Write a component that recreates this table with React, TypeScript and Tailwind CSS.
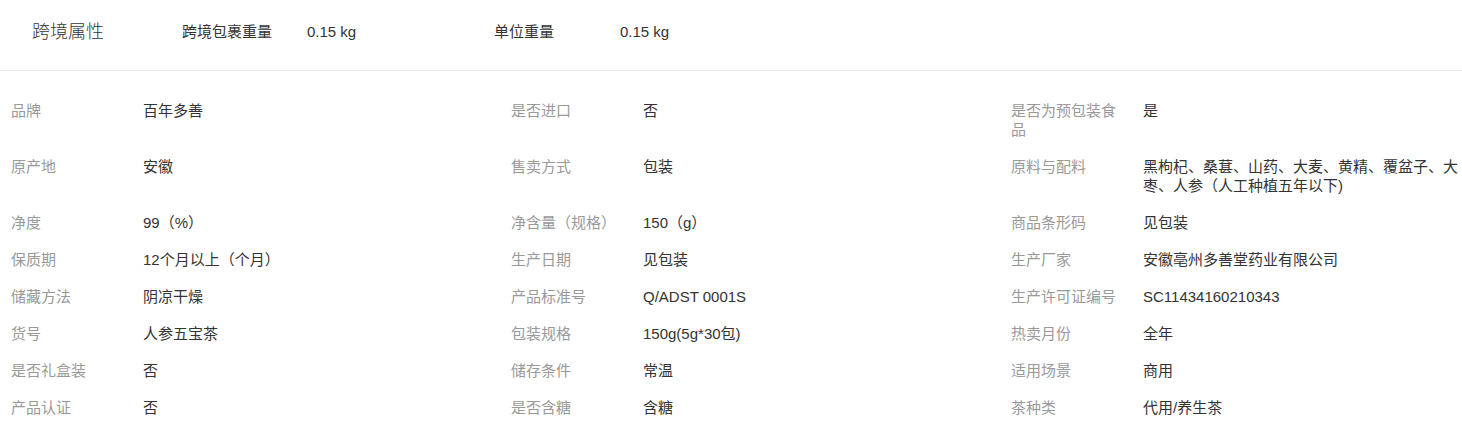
import React from 'react';

type Attr = { label: string; value: string };

const attrs: Attr[] = [
  { label: '品牌', value: '百年多善' },
  { label: '是否进口', value: '否' },
  { label: '是否为预包装食品', value: '是' },
  { label: '原产地', value: '安徽' },
  { label: '售卖方式', value: '包装' },
  { label: '原料与配料', value: '黑枸杞、桑葚、山药、大麦、黄精、覆盆子、大枣、人参（人工种植五年以下)' },
  { label: '净度', value: '99（%）' },
  { label: '净含量（规格）', value: '150（g）' },
  { label: '商品条形码', value: '见包装' },
  { label: '保质期', value: '12个月以上（个月）' },
  { label: '生产日期', value: '见包装' },
  { label: '生产厂家', value: '安徽亳州多善堂药业有限公司' },
  { label: '储藏方法', value: '阴凉干燥' },
  { label: '产品标准号', value: 'Q/ADST 0001S' },
  { label: '生产许可证编号', value: 'SC11434160210343' },
  { label: '货号', value: '人参五宝茶' },
  { label: '包装规格', value: '150g(5g*30包)' },
  { label: '热卖月份', value: '全年' },
  { label: '是否礼盒装', value: '否' },
  { label: '储存条件', value: '常温' },
  { label: '适用场景', value: '商用' },
  { label: '产品认证', value: '否' },
  { label: '是否含糖', value: '含糖' },
  { label: '茶种类', value: '代用/养生茶' },
];

export default function App() {
  return (
    <div
      className="w-[1462px] h-[428px] bg-white overflow-hidden"
      style={{ fontFamily: '"Liberation Sans", "Noto Sans CJK SC", sans-serif' }}
    >
      {/* Cross-border header */}
      <div className="flex items-center pt-[22px] pb-[28px] border-b border-[#e6e6e6] leading-[20px]">
        <div className="pl-[32px] w-[182px] text-[18px] font-light text-[#333]">跨境属性</div>
        <div className="w-[125px] text-[15px] text-[#333]">跨境包裹重量</div>
        <div className="w-[187px] text-[15px] text-[#333]">0.15 kg</div>
        <div className="w-[126px] text-[15px] text-[#333]">单位重量</div>
        <div className="text-[15px] text-[#333]">0.15 kg</div>
      </div>

      {/* Attribute grid */}
      <div className="grid grid-cols-[500px_500px_1fr] pl-[11px] pt-[21px] text-[15px] leading-[19px]">
        {attrs.map((a, i) => (
          <div key={i} className="flex py-[9px]">
            <div className="w-[132px] shrink-0 pr-[20px] text-[#999]">{a.label}</div>
            <div className="flex-1 min-w-0 text-[#333]">{a.value}</div>
          </div>
        ))}
      </div>
    </div>
  );
}
